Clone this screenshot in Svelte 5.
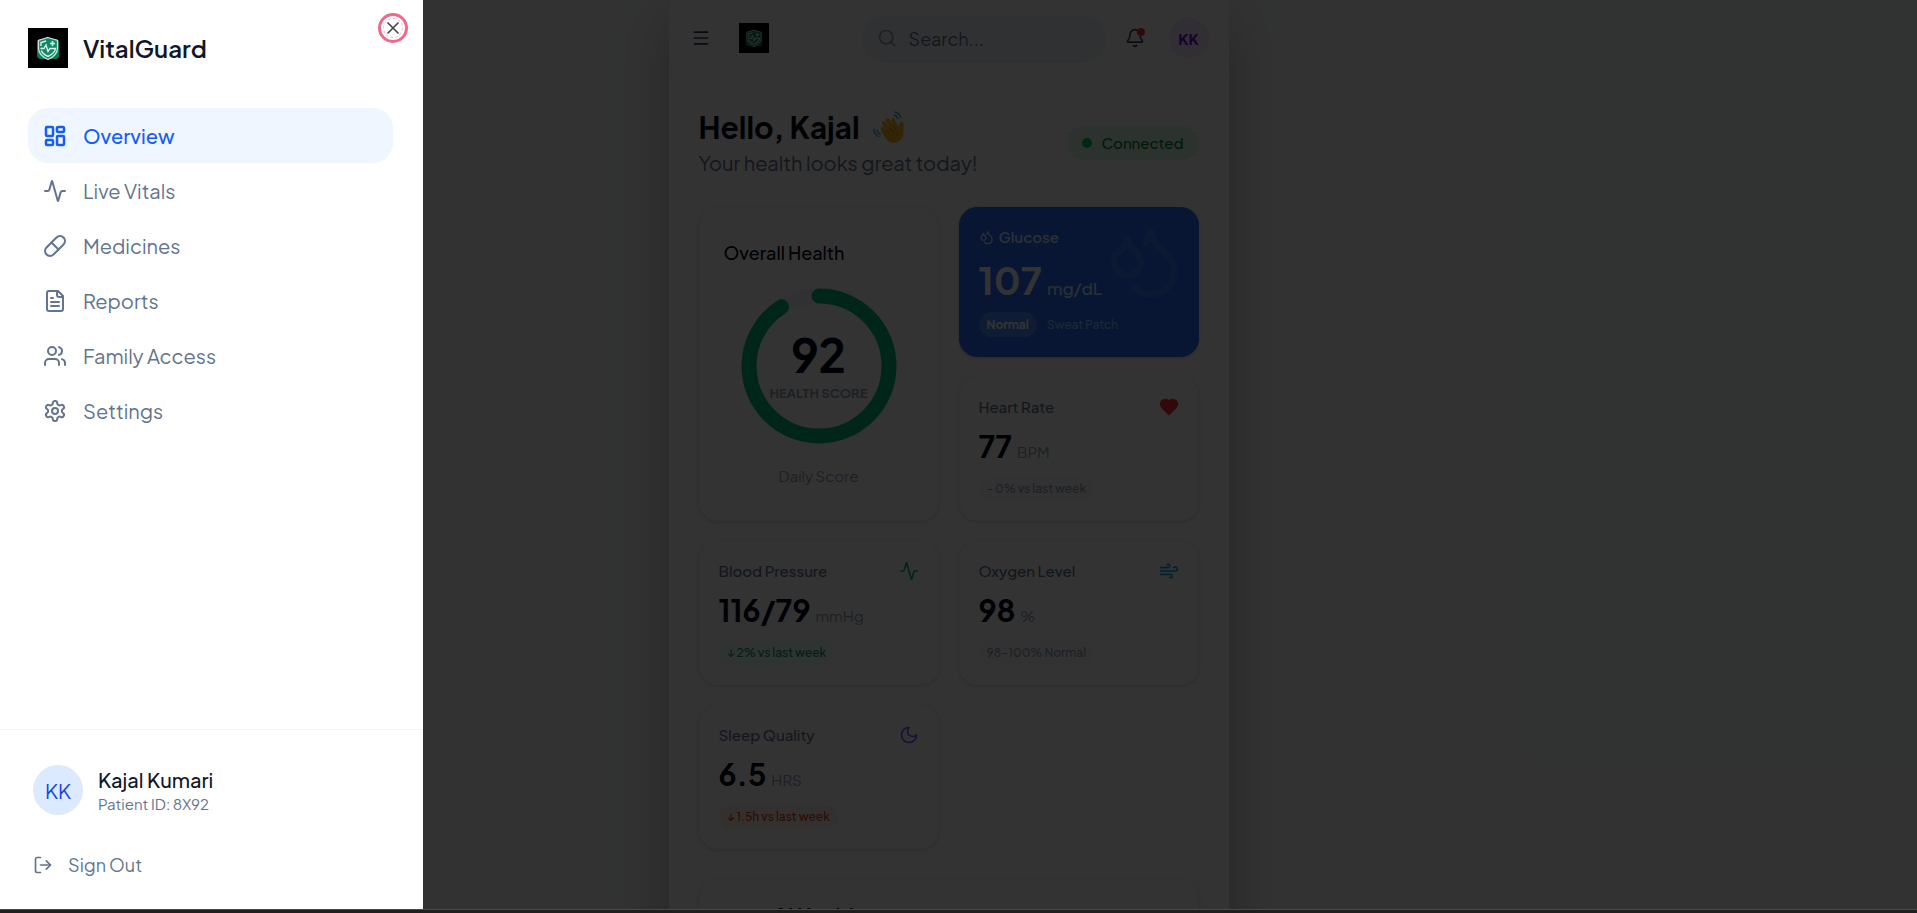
<script lang="ts">
  interface NavItem {
    label: string;
    icon: string[];
  }

  interface Vital {
    label: string;
    value: string;
    unit: string;
    note: string;
    tone: string;
    kind: string;
    icon: string[];
  }

  const pulse = [
    'M22 12h-2.48a2 2 0 0 0-1.93 1.46l-2.35 8.36a.25.25 0 0 1-.48 0L9.24 2.18a.25.25 0 0 0-.48 0l-2.35 8.36A2 2 0 0 1 4.49 12H2',
  ];

  const drops = [
    'M7 16.3c2.2 0 4-1.83 4-4.05 0-1.16-.57-2.26-1.71-3.19S7.29 6.75 7 5.3c-.29 1.45-1.14 2.84-2.29 3.76S3 11.1 3 12.25c0 2.22 1.8 4.05 4 4.05z',
    'M12.56 6.6A10.97 10.97 0 0 0 14 3.02c.5 2.5 2 4.9 4 6.5s3 3.5 3 5.5a6.98 6.98 0 0 1-11.91 4.97',
  ];

  const navItems: NavItem[] = [
    {
      label: 'Overview',
      icon: [
        'M4 3h5a1 1 0 0 1 1 1v7a1 1 0 0 1-1 1H4a1 1 0 0 1-1-1V4a1 1 0 0 1 1-1z',
        'M15 3h5a1 1 0 0 1 1 1v3a1 1 0 0 1-1 1h-5a1 1 0 0 1-1-1V4a1 1 0 0 1 1-1z',
        'M15 12h5a1 1 0 0 1 1 1v7a1 1 0 0 1-1 1h-5a1 1 0 0 1-1-1v-7a1 1 0 0 1 1-1z',
        'M4 16h5a1 1 0 0 1 1 1v3a1 1 0 0 1-1 1H4a1 1 0 0 1-1-1v-3a1 1 0 0 1 1-1z',
      ],
    },
    { label: 'Live Vitals', icon: pulse },
    {
      label: 'Medicines',
      icon: ['m10.5 20.5 10-10a4.95 4.95 0 1 0-7-7l-10 10a4.95 4.95 0 1 0 7 7Z', 'm8.5 8.5 7 7'],
    },
    {
      label: 'Reports',
      icon: ['M15 2H6a2 2 0 0 0-2 2v16a2 2 0 0 0 2 2h12a2 2 0 0 0 2-2V7Z', 'M14 2v4a2 2 0 0 0 2 2h4', 'M10 9H8', 'M16 13H8', 'M16 17H8'],
    },
    {
      label: 'Family Access',
      icon: ['M16 21v-2a4 4 0 0 0-4-4H6a4 4 0 0 0-4 4v2', 'M13 7a4 4 0 1 1-8 0a4 4 0 1 1 8 0', 'M22 21v-2a4 4 0 0 0-3-3.87', 'M16 3.13a4 4 0 0 1 0 7.75'],
    },
    {
      label: 'Settings',
      icon: [
        'M12.22 2h-.44a2 2 0 0 0-2 2v.18a2 2 0 0 1-1 1.73l-.43.25a2 2 0 0 1-2 0l-.15-.08a2 2 0 0 0-2.73.73l-.22.38a2 2 0 0 0 .73 2.73l.15.1a2 2 0 0 1 1 1.72v.51a2 2 0 0 1-1 1.74l-.15.09a2 2 0 0 0-.73 2.73l.22.38a2 2 0 0 0 2.73.73l.15-.08a2 2 0 0 1 2 0l.43.25a2 2 0 0 1 1 1.73V20a2 2 0 0 0 2 2h.44a2 2 0 0 0 2-2v-.18a2 2 0 0 1 1-1.73l.43-.25a2 2 0 0 1 2 0l.15.08a2 2 0 0 0 2.73-.73l.22-.39a2 2 0 0 0-.73-2.73l-.15-.08a2 2 0 0 1-1-1.74v-.5a2 2 0 0 1 1-1.74l.15-.09a2 2 0 0 0 .73-2.73l-.22-.38a2 2 0 0 0-2.73-.73l-.15.08a2 2 0 0 1-2 0l-.43-.25a2 2 0 0 1-1-1.73V4a2 2 0 0 0-2-2z',
        'M15 12a3 3 0 1 1-6 0a3 3 0 1 1 6 0',
      ],
    },
  ];

  const vitals: Vital[] = [
    {
      label: 'Heart Rate',
      value: '77',
      unit: 'BPM',
      note: '- 0% vs last week',
      tone: 'neutral',
      kind: 'heart',
      icon: ['M19 14c1.49-1.46 3-3.21 3-5.5A5.5 5.5 0 0 0 16.5 3c-1.76 0-3 .5-4.5 2-1.5-1.5-2.74-2-4.5-2A5.5 5.5 0 0 0 2 8.5c0 2.3 1.5 4.05 3 5.5l7 7Z'],
    },
    {
      label: 'Blood Pressure',
      value: '116/79',
      unit: 'mmHg',
      note: '↓ 2% vs last week',
      tone: 'good',
      kind: 'pressure',
      icon: pulse,
    },
    {
      label: 'Oxygen Level',
      value: '98',
      unit: '%',
      note: '98–100% Normal',
      tone: 'neutral',
      kind: 'oxygen',
      icon: ['M12.8 19.6A2 2 0 1 0 14 16H2', 'M17.5 8a2.5 2.5 0 1 1 2 4H2', 'M9.8 4.4A2 2 0 1 1 11 8H2'],
    },
    {
      label: 'Sleep Quality',
      value: '6.5',
      unit: 'HRS',
      note: '↓ 1.5h vs last week',
      tone: 'warn',
      kind: 'sleep',
      icon: ['M12 3a6 6 0 0 0 9 9 9 9 0 1 1-9-9Z'],
    },
  ];

  let active = $state('Overview');
  let menuOpen = $state(true);
  let search = $state('');
</script>

{#snippet icon(paths: string[])}
  <svg class="icon" viewBox="0 0 24 24" aria-hidden="true">
    {#each paths as d}
      <path {d} />
    {/each}
  </svg>
{/snippet}

{#snippet logo()}
  <svg class="logo" viewBox="0 0 40 40" role="img" aria-label="VitalGuard">
    <rect width="40" height="40" fill="#000" />
    <rect x="9" y="11" width="22" height="20" rx="4" fill="#0b7a5c" />
    <path d="M20 9.5l9.500 3v8c0 5-4 8.500-9.500 11-5.500-2.500-9.500-6-9.500-11v-8z" fill="#0f8a66" stroke="#c9e2da" stroke-width="1.300" />
    <path d="M13 18v-3.500l5-1.500M12.500 20.500h3.500l2-3.500 2 6.500 2-3h5.500c-.5 3.500-3.500 6-7.500 8-3-1.500-6-3.500-6.600-6" fill="none" stroke="#e3f2ed" stroke-width="1.400" />
    <path d="M24.500 13v5M22 15.500h5" stroke="#d8efe6" stroke-width="1.600" />
  </svg>
{/snippet}

{#snippet vitalCard(vital: Vital)}
  <article class="card vital">
    <header>
      <h3>{vital.label}</h3>
      <span class="vital-icon {vital.kind}">{@render icon(vital.icon)}</span>
    </header>
    <p class="reading"><strong>{vital.value}</strong><span>{vital.unit}</span></p>
    <span class="note {vital.tone}">{vital.note}</span>
  </article>
{/snippet}

<div class="viewport">
  <div class="phone">
    <header class="topbar">
      <button class="plain" aria-label="Open menu" onclick={() => (menuOpen = true)}>
        {@render icon(['M4 5h16', 'M4 12h16', 'M4 19h16'])}
      </button>
      {@render logo()}
      <label class="search">
        {@render icon(['M19 11a8 8 0 1 1-16 0a8 8 0 1 1 16 0', 'm21 21-4.3-4.3'])}
        <input type="search" placeholder="Search..." aria-label="Search" bind:value={search} />
      </label>
      <button class="plain bell" aria-label="Notifications">
        {@render icon(['M10.268 21a2 2 0 0 0 3.464 0', 'M3.262 15.326A1 1 0 0 0 4 17h16a1 1 0 0 0 .74-1.673C19.41 13.956 18 12.499 18 8A6 6 0 0 0 6 8c0 4.499-1.411 5.956-2.738 7.326'])}
        <i></i>
      </button>
      <button class="account">KK</button>
    </header>

    <main>
      <section class="greeting">
        <div>
          <h1>
            Hello, Kajal
            <svg class="wave" viewBox="0 0 32 32" aria-hidden="true">
              <path
                d="M8 19c-1.600-2.300 1.200-4.200 2.800-2.200l3 3.200-4.500-6.500c-1.500-2.400 1.500-4.500 3.300-2.200l4.400 5.700-4-6.900c-1.300-2.500 1.800-4.200 3.300-2l4.200 6.500-2.300-5c-1-2.300 1.900-3.600 3.100-1.500l4.300 8.500c.3-1.700.4-3 1-4.400.9-2 4.100-1.500 4.100.8 0 2.500-.4 4.500-.3 7 .2 4-1 8-4.500 10.300-4.300 2.700-9.600 1.700-12.500-2z"
                fill="#f9b21d"
              />
              <path d="M13.500 19.500l2.500 3M16.700 16.500l3 4M20.200 14l2.600 4" stroke="#dc7d12" fill="none" />
              <path d="M20.500 4c2.200.3 3.700 1.800 4.300 4M21.500 1c3.300.4 5.500 2.500 6.300 6M4 18.500c0 2.200 1.300 4 3.500 4.800M1 17.500c-.2 4 1.800 7 5.300 8.500" stroke="#3f9fd8" stroke-width="1.300" fill="none" />
            </svg>
          </h1>
          <p>Your health looks great today!</p>
        </div>
        <span class="connected"><i></i>Connected</span>
      </section>

      <section class="grid">
        <article class="card score">
          <h2>Overall Health</h2>
          <div class="ring">
            <svg viewBox="0 0 156 156" aria-hidden="true">
              <circle cx="78" cy="78" r="70" stroke="#f1f5f9" />
              <circle cx="78" cy="78" r="70" stroke="#00bc7d" pathLength="100" stroke-dasharray="91 100" transform="rotate(-90 78 78)" />
            </svg>
            <div class="ring-text">
              <strong>92</strong>
              <span>HEALTH SCORE</span>
            </div>
          </div>
          <p>Daily Score</p>
        </article>
        <div class="stack">
          <article class="card glucose">
            <span class="watermark">{@render icon(drops)}</span>
            <h3>{@render icon(drops)}Glucose</h3>
            <p class="reading"><strong>107</strong><span>mg/dL</span></p>
            <div class="source"><b>Normal</b><span>Sweat Patch</span></div>
          </article>
          {@render vitalCard(vitals[0])}
        </div>
        {#each vitals.slice(1) as vital}
          {@render vitalCard(vital)}
        {/each}
      </section>

      <section class="card insights">
        <h2>AI Health</h2>
      </section>
    </main>
  </div>

  {#if menuOpen}
    <div class="overlay"></div>
    <aside class="drawer">
      <button class="close" aria-label="Close menu" onclick={() => (menuOpen = false)}>
        {@render icon(['M18 6 6 18', 'm6 6 12 12'])}
      </button>
      <div class="brand">
        {@render logo()}
        <span>VitalGuard</span>
      </div>
      <nav>
        {#each navItems as item}
          <a href="#{item.label}" class:active={active === item.label} onclick={() => (active = item.label)}>
            {@render icon(item.icon)}
            {item.label}
          </a>
        {/each}
      </nav>
      <footer>
        <div class="profile">
          <span class="avatar">KK</span>
          <div>
            <strong>Kajal Kumari</strong>
            <small>Patient ID: 8X92</small>
          </div>
        </div>
        <button class="signout">
          {@render icon(['M9 3H5a2 2 0 0 0-2 2v14a2 2 0 0 0 2 2h4', 'm16 17 5-5-5-5', 'M21 12H9'])}
          Sign Out
        </button>
      </footer>
    </aside>
  {/if}
  <div class="edge"></div>
</div>

<style>
  :global(body) {
    background: #f8fafa;
    overflow: hidden;
  }

  .viewport {
    position: relative;
    height: 100vh;
    overflow: hidden;
    background: #f7f9f8;
    color: #020618;
    font-family: 'Plus Jakarta Sans', 'Open Sans', sans-serif;
  }

  h1,
  h2,
  h3,
  p {
    margin: 0;
  }

  button,
  input {
    font: inherit;
    color: inherit;
    border: 0;
    background: none;
    padding: 0;
  }

  button {
    cursor: pointer;
  }

  .icon {
    display: block;
    flex: none;
    width: 24px;
    height: 24px;
    fill: none;
    stroke: currentColor;
    stroke-width: 2;
    stroke-linecap: round;
    stroke-linejoin: round;
  }

  .logo {
    display: block;
    flex: none;
    width: 40px;
    height: 40px;
  }

  .phone {
    box-sizing: border-box;
    width: 100%;
    max-width: 560px;
    margin: 0 auto;
    position: relative;
    left: -10px;
    background: #fcfcfd;
    box-shadow: 0 24px 50px rgba(0, 0, 0, 0.25);
  }

  .topbar {
    display: flex;
    align-items: center;
    height: 77px;
    box-sizing: border-box;
    padding: 0 20px 0 22px;
    background: #fff;
    border-bottom: 1px solid #f8fafc;
    color: #314158;
  }

  .topbar .icon {
    width: 20px;
    height: 20px;
  }

  .topbar .logo {
    width: 30px;
    height: 30px;
    margin-left: 28px;
  }

  .search {
    display: flex;
    align-items: center;
    gap: 12px;
    width: 242px;
    height: 46px;
    box-sizing: border-box;
    margin-left: auto;
    padding: 0 14px;
    border-radius: 23px;
    background: #f1f5f9;
    box-shadow: 0 1px 3px rgba(0, 0, 0, 0.1);
    color: #90a1b9;
  }

  .search input {
    width: 100%;
    min-width: 0;
    outline: 0;
    font-size: 18px;
  }

  .search input::placeholder {
    color: #62748e;
  }

  .bell {
    position: relative;
    margin-left: 20px;
  }

  .bell i {
    position: absolute;
    top: 0;
    right: 0;
    width: 8px;
    height: 8px;
    border-radius: 50%;
    background: #fb2c36;
  }

  .account {
    width: 40px;
    height: 40px;
    margin-left: 24px;
    border-radius: 50%;
    background: #f3e8ff;
    color: #8200db;
    font-size: 15px;
    font-weight: 700;
  }

  main {
    padding: 28px 30px 0;
  }

  .greeting {
    display: flex;
    align-items: center;
    justify-content: space-between;
  }

  h1 {
    display: flex;
    align-items: center;
    gap: 13px;
    font-size: 30px;
    line-height: 44px;
    font-weight: 700;
  }

  .wave {
    width: 32px;
    height: 32px;
  }

  .greeting p {
    font-size: 20px;
    line-height: 28px;
    color: #62748e;
  }

  .connected {
    display: flex;
    align-items: center;
    gap: 10px;
    margin-top: 4px;
    padding: 0 15px;
    border-radius: 17px;
    background: #dcfce7;
    color: #008236;
    font-size: 15px;
    line-height: 34px;
    font-weight: 500;
  }

  .connected i {
    width: 10px;
    height: 10px;
    border-radius: 50%;
    background: #00c950;
  }

  .grid {
    display: grid;
    grid-template-columns: 1fr 1fr;
    gap: 20px;
    margin-top: 30px;
  }

  .card {
    box-sizing: border-box;
    border-radius: 18px;
    background: #fff;
    border: 1px solid #f8fafc;
    box-shadow: 0 1px 3px rgba(0, 0, 0, 0.14);
  }

  .stack {
    display: flex;
    flex-direction: column;
    gap: 20px;
  }

  .score {
    padding: 32px 24px;
    text-align: center;
  }

  .score h2 {
    text-align: left;
    font-size: 18px;
    line-height: 26px;
    font-weight: 500;
  }

  .ring {
    position: relative;
    width: 156px;
    height: 156px;
    margin: 22px auto 20px;
  }

  .ring circle {
    fill: none;
    stroke-width: 15;
    stroke-linecap: round;
  }

  .ring-text {
    position: absolute;
    inset: 0;
    display: flex;
    flex-direction: column;
    align-items: center;
    justify-content: center;
    white-space: nowrap;
  }

  .ring-text strong {
    font-size: 46px;
    line-height: 54px;
  }

  .ring-text span {
    font-size: 13px;
    line-height: 24px;
    font-weight: 700;
    color: #90a1b9;
  }

  .score p {
    font-size: 15px;
    line-height: 24px;
    color: #90a1b9;
  }

  .reading {
    display: flex;
    align-items: baseline;
    gap: 5px;
    margin-top: 7px;
    line-height: 40px;
    white-space: nowrap;
  }

  .reading strong {
    font-size: 30px;
  }

  .reading span {
    font-size: 15px;
    line-height: 20px;
    color: #90a1b9;
  }

  .glucose {
    position: relative;
    height: 150px;
    padding: 17px 19px;
    background: #2970ff;
    border-color: #2970ff;
    color: #fff;
  }

  .glucose h3 {
    display: flex;
    align-items: center;
    gap: 5px;
    font-size: 15px;
    line-height: 24px;
    font-weight: 600;
    color: #dbeafe;
  }

  .glucose h3 .icon {
    width: 15px;
    height: 15px;
  }

  .glucose .reading {
    margin-top: 4px;
    line-height: 54px;
  }

  .glucose .reading strong {
    font-size: 38px;
  }

  .glucose .reading span {
    font-size: 17px;
    font-weight: 500;
    color: #dbeafe;
  }

  .watermark {
    position: absolute;
    top: 13px;
    right: 14px;
    opacity: 0.1;
  }

  .watermark .icon {
    width: 80px;
    height: 80px;
  }

  .source {
    display: flex;
    align-items: center;
    gap: 10px;
    margin-top: 5px;
    font-size: 12px;
    line-height: 25px;
    font-weight: 500;
    color: #8ec5ff;
  }

  .source b {
    padding: 0 8px;
    border-radius: 13px;
    background: rgba(255, 255, 255, 0.2);
    color: #fff;
  }

  .vital {
    display: flex;
    flex-direction: column;
    align-items: flex-start;
    height: 144px;
    padding: 17px 19px;
  }

  .vital header {
    display: flex;
    align-items: center;
    justify-content: space-between;
    width: 100%;
  }

  .vital h3 {
    font-size: 15px;
    line-height: 24px;
    font-weight: 500;
    color: #62748e;
  }

  .vital-icon .icon {
    width: 20px;
    height: 20px;
  }

  .heart {
    color: #fb2c36;
  }

  .heart .icon {
    fill: currentColor;
  }

  .pressure {
    color: #00bc7d;
  }

  .oxygen {
    color: #00a6f4;
  }

  .sleep {
    color: #615fff;
  }

  .note {
    margin-top: 11px;
    padding: 0 8px;
    border-radius: 12px;
    font-size: 12px;
    line-height: 24px;
    font-weight: 500;
    background: #f8fafc;
    color: #90a1b9;
  }

  .note.good {
    background: #ecfdf5;
    color: #009966;
  }

  .note.warn {
    background: #fff4ed;
    color: #e63c00;
  }

  .insights {
    margin-top: 30px;
    padding: 22px 74px;
  }

  .insights h2 {
    font-size: 20px;
    line-height: 26px;
  }

  .overlay {
    position: absolute;
    inset: 0;
    background: rgba(0, 0, 0, 0.8);
  }

  .drawer {
    position: absolute;
    inset: 0 auto 4px 0;
    display: flex;
    flex-direction: column;
    width: 423px;
    max-width: 100%;
    background: #fff;
    color: #62748e;
  }

  .close {
    position: absolute;
    top: 13px;
    right: 15px;
    display: grid;
    place-items: center;
    width: 30px;
    height: 30px;
    border: 3px solid #ee6a88;
    border-radius: 50%;
    color: #45474d;
  }

  .close::before {
    content: '';
    position: absolute;
    inset: 2px;
    border: 1px dashed #f7b9c6;
    border-radius: 50%;
  }

  .close .icon {
    width: 20px;
    height: 20px;
  }

  .brand {
    display: flex;
    gap: 15px;
    padding: 28px 28px 12px;
    font-size: 24px;
    line-height: 40px;
    font-weight: 600;
    color: #0f172b;
  }

  nav {
    flex: 1;
    padding: 28px 30px 0 28px;
  }

  nav a {
    display: flex;
    align-items: center;
    gap: 16px;
    height: 55px;
    padding: 0 15px;
    border-radius: 20px;
    font-size: 20px;
    color: inherit;
    text-decoration: none;
  }

  nav a.active {
    background: #eff6ff;
    color: #155dfc;
    font-weight: 500;
  }

  nav a.active .icon {
    stroke-width: 2.5;
  }

  footer {
    padding: 35px 33px 24px;
    border-top: 1px solid #f1f5f9;
  }

  .profile {
    display: flex;
    align-items: center;
    gap: 15px;
  }

  .avatar {
    display: grid;
    place-items: center;
    width: 50px;
    height: 50px;
    box-sizing: border-box;
    border: 1px solid #e2e8f0;
    border-radius: 50%;
    background: #dbeafe;
    color: #1447e6;
    font-size: 20px;
  }

  .profile strong,
  .profile small {
    display: block;
  }

  .profile strong {
    padding-top: 2px;
    color: #0f172b;
    font-size: 20px;
    line-height: 26px;
    font-weight: 500;
  }

  .profile small {
    font-size: 15px;
    line-height: 22px;
  }

  .signout {
    display: flex;
    align-items: center;
    gap: 15px;
    margin-top: 30px;
    font-size: 18px;
    line-height: 40px;
  }

  .signout .icon {
    width: 20px;
    height: 20px;
  }

  .edge {
    position: absolute;
    inset: auto 0 0;
    height: 3px;
    border-top: 1px solid #4a4a4d;
    background: #1f1e20;
  }
</style>
